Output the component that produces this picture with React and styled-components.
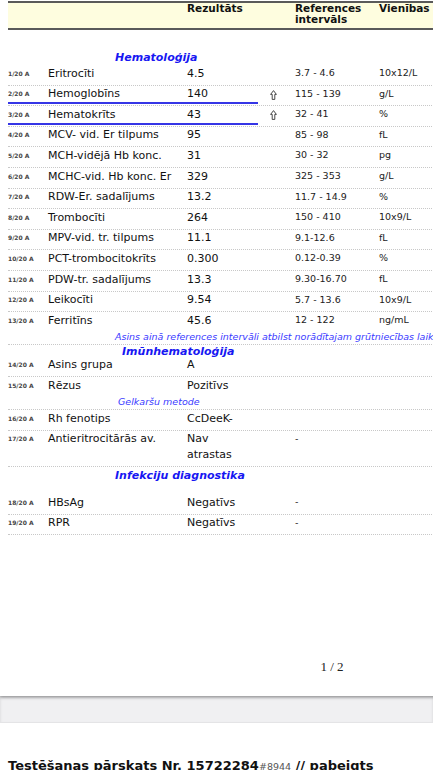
import React from 'react'
import styled, { createGlobalStyle } from 'styled-components';

const GlobalStyle = createGlobalStyle`
    html, body {
        margin: 0;
        padding: 0;
        background: #ffffff;
        overflow: hidden;
    }
    body {
        font-family: "DejaVu Sans", Verdana, sans-serif;
        color: #111;
    }
`;

const Viewport = styled.div`
    width: 433px;
    height: 770px;
    overflow: hidden;
`;

const Sheet = styled.div`
    width: 648px;
    padding: 1px 0 21px 8px;
    background: #fff;
    box-shadow: 0 1px 3px rgba(0, 0, 0, 0.35);
    position: relative;
    z-index: 1;
`;

const HeaderBar = styled.div`
    display: grid;
    grid-template-columns: 40px 139px 71px 37px 84px 1fr;
    height: 25px;
    background: #fefddf;
    border-top: 2px solid #5a5a5a;
    border-bottom: 2px solid #5a5a5a;
`;

const HeadCell = styled.div`
    grid-column: ${p => p.col};
    font-size: 10.5px;
    font-weight: bold;
    line-height: 11px;
    color: #111;
`;

const SectionTitle = styled.div`
    padding: ${p => p.pad || '0'};
    padding-left: ${p => p.indent}px;
    font-size: 11px;
    font-weight: bold;
    font-style: italic;
    line-height: ${p => p.lh || 14}px;
    color: #1717f2;
    white-space: nowrap;
`;

const Row = styled.div`
    display: grid;
    grid-template-columns: 250px 37px 84px 1fr;
    border-bottom: 1px dotted #c8c8c8;
`;

const Main = styled.div`
    display: grid;
    grid-template-columns: 40px 139px 71px;
    padding-top: 0.6px;
    border-bottom: 2px solid ${p => (p.flagged ? '#3535e6' : 'transparent')};
    margin-bottom: 1px;
    line-height: 16px;
`;

const IdCell = styled.div`
    font-size: 6px;
    font-weight: bold;
    color: #444;
    line-height: 16px;
`;

const Name = styled.div`
    font-size: 11px;
    color: #111;
    white-space: nowrap;
`;

const Result = styled.div`
    font-size: 11px;
    color: #111;
`;

const Flag = styled.div`
    display: flex;
    align-items: center;
    height: 16px;
    padding: 1px 0 0 12px;
`;

const Small = styled.div`
    font-size: 9.5px;
    line-height: 16px;
    color: #222;
`;

const Note = styled.div`
    grid-column: 1 / -1;
    margin-top: -2px;
    padding: 0 0 1px ${p => p.indent}px;
    font-size: 9.5px;
    font-style: italic;
    line-height: 13px;
    color: #3a3aff;
    white-space: nowrap;
`;

const PageNumber = styled.div`
    margin-top: 124px;
    text-align: center;
    font-family: "Liberation Serif", "Times New Roman", serif;
    font-size: 13px;
    line-height: 16px;
    color: #222;
`;

const Gap = styled.div`
    height: 26px;
    background: #f0f0f2;
    box-shadow: inset 0 2px 3px rgba(0, 0, 0, 0.12);
    border-bottom: 1px solid #e4e4e6;
`;

const NextPage = styled.div`
    padding: 35px 0 0 8px;
    font-size: 13px;
    font-weight: bold;
    line-height: 16px;
    color: #111;
    white-space: nowrap;
`;

const Hash = styled.span`
    font-size: 9.5px;
    font-weight: normal;
    color: #555;
`;

const UpArrow = () => (
    <svg width="7" height="10" viewBox="0 0 7 10">
        <polygon points="3.5,0.6 6.4,4.4 4.8,4.4 4.8,9.4 2.2,9.4 2.2,4.4 0.6,4.4"
            fill="none" stroke="#333" strokeWidth="0.9" strokeLinejoin="miter" />
    </svg>
);

const hematology = [
    ['1/20 A', 'Eritrocīti', '4.5', false, '3.7 - 4.6', '10x12/L'],
    ['2/20 A', 'Hemoglobīns', '140', true, '115 - 139', 'g/L'],
    ['3/20 A', 'Hematokrīts', '43', true, '32 - 41', '%'],
    ['4/20 A', 'MCV- vid. Er tilpums', '95', false, '85 - 98', 'fL'],
    ['5/20 A', 'MCH-vidējā Hb konc.', '31', false, '30 - 32', 'pg'],
    ['6/20 A', 'MCHC-vid. Hb konc. Er', '329', false, '325 - 353', 'g/L'],
    ['7/20 A', 'RDW-Er. sadalījums', '13.2', false, '11.7 - 14.9', '%'],
    ['8/20 A', 'Trombocīti', '264', false, '150 - 410', '10x9/L'],
    ['9/20 A', 'MPV-vid. tr. tilpums', '11.1', false, '9.1-12.6', 'fL'],
    ['10/20 A', 'PCT-trombocitokrīts', '0.300', false, '0.12-0.39', '%'],
    ['11/20 A', 'PDW-tr. sadalījums', '13.3', false, '9.30-16.70', 'fL'],
    ['12/20 A', 'Leikocīti', '9.54', false, '5.7 - 13.6', '10x9/L'],
    ['13/20 A', 'Ferritīns', '45.6', false, '12 - 122', 'ng/mL',
        'Asins ainā references intervāli atbilst norādītajam grūtniecības laikam', 107],
];

const immuno = [
    ['14/20 A', 'Asins grupa', 'A', false, '', ''],
    ['15/20 A', 'Rēzus', 'Pozitīvs', false, '', '', 'Gelkaršu metode', 110],
    ['16/20 A', 'Rh fenotips', 'CcDeeK-', false, '', ''],
    ['17/20 A', 'Antieritrocitārās av.', <>Nav<br />atrastas</>, false, '-', ''],
];

const infections = [
    ['18/20 A', 'HBsAg', 'Negatīvs', false, '-', ''],
    ['19/20 A', 'RPR', 'Negatīvs', false, '-', ''],
];

const ResultRow = ({ item }) => {
    const [id, name, value, flagged, range, unit, note, indent] = item;
    return (
        <Row>
            <Main flagged={flagged}>
                <IdCell>{id}</IdCell>
                <Name>{name}</Name>
                <Result>{value}</Result>
            </Main>
            <Flag>{flagged && <UpArrow />}</Flag>
            <Small>{range}</Small>
            <Small>{unit}</Small>
            {note && <Note indent={indent}>{note}</Note>}
        </Row>
    );
};

const App = () => {
    return (
        <Viewport>
            <GlobalStyle />
            <Sheet>
                <HeaderBar>
                    <HeadCell col={3}>Rezultāts</HeadCell>
                    <HeadCell col={5}>References<br />intervāls</HeadCell>
                    <HeadCell col={6}>Vienības</HeadCell>
                </HeaderBar>

                <SectionTitle indent={107} pad="20px 0 0" lh={15}>Hematoloģija</SectionTitle>
                {hematology.map(item => <ResultRow key={item[0]} item={item} />)}

                <SectionTitle indent={114} pad="2px 0 0" lh={10}>Imūnhematoloģija</SectionTitle>
                {immuno.map(item => <ResultRow key={item[0]} item={item} />)}

                <SectionTitle indent={107} pad="2px 0 11px" lh={14}>Infekciju diagnostika</SectionTitle>
                {infections.map(item => <ResultRow key={item[0]} item={item} />)}

                <PageNumber>1 / 2</PageNumber>
            </Sheet>
            <Gap />
            <NextPage>
                Testēšanas pārskats Nr. 15722284<Hash>#8944</Hash> // pabeigts
            </NextPage>
        </Viewport>
    )
}

export default App
